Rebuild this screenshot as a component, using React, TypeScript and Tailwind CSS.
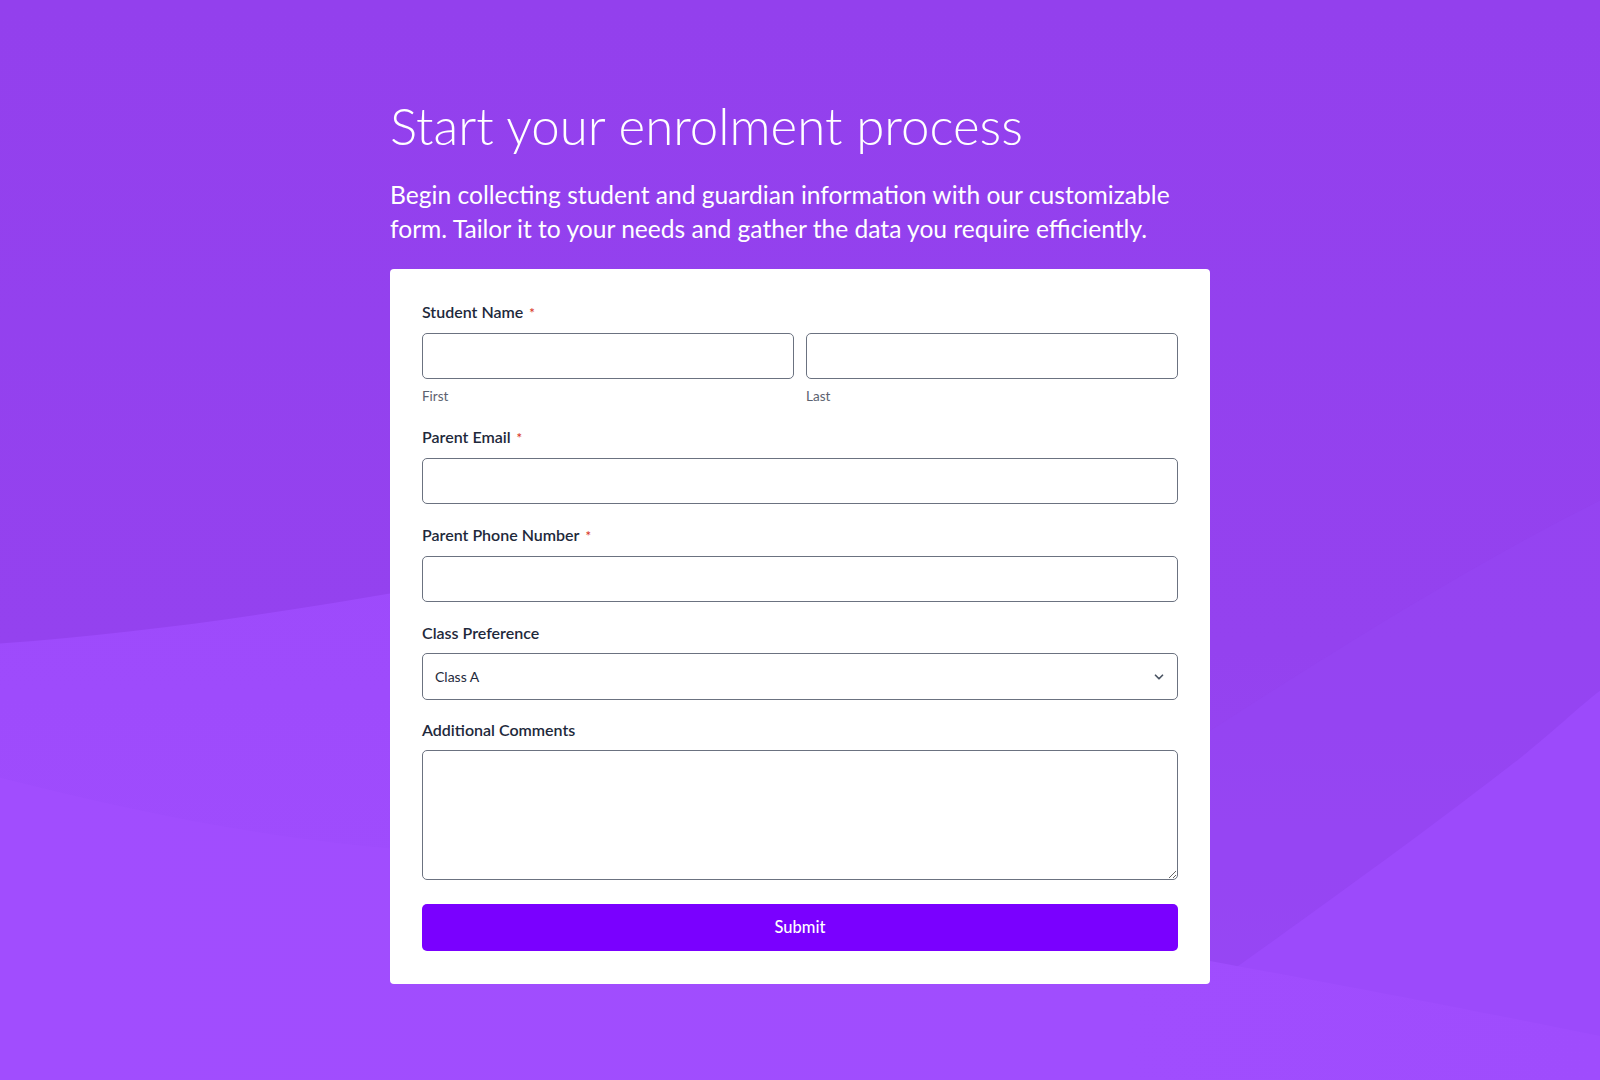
import React from 'react';
import { ChevronDown } from 'lucide-react';

// Background waves drawn behind the form
function Waves() {
  return (
    <svg
      className="absolute inset-0 w-full h-full"
      viewBox="0 0 1600 1080"
      preserveAspectRatio="none"
    >
      <defs>
        <linearGradient id="bgTop" x1="0" y1="0" x2="0" y2="1">
          <stop offset="0" stopColor="#9340ed" />
          <stop offset="0.6" stopColor="#9442ef" />
          <stop offset="1" stopColor="#9948f6" />
        </linearGradient>
        <linearGradient id="bgLow" x1="0" y1="0" x2="0" y2="1">
          <stop offset="0" stopColor="#9d4afb" />
          <stop offset="1" stopColor="#a04dfe" />
        </linearGradient>
        <linearGradient id="bgBand" x1="0" y1="0" x2="1" y2="0">
          <stop offset="0" stopColor="#a14dfe" />
          <stop offset="0.7" stopColor="#a04dfe" />
          <stop offset="1" stopColor="#9f4cfd" />
        </linearGradient>
      </defs>
      <rect x="0" y="0" width="1600" height="1080" fill="url(#bgTop)" />
      {/* faint line on the right */}
      <path d="M1210 730 C 1350 640, 1480 560, 1600 500 V 1080 H 1210 Z" fill="#9645f3" opacity="0.5" />
      {/* lighter area below the left curve */}
      <path d="M0 643 C 150 632, 280 612, 420 588 L 1100 500 L 1150 1080 L 0 1080 Z" fill="url(#bgLow)" />
      {/* lighter area on the right */}
      <path d="M1000 1080 C 1100 1040, 1160 1010, 1210 985 C 1330 900, 1440 820, 1523 755 C 1560 725, 1580 705, 1600 690 V 1080 Z" fill="#9c4afb" />
      {/* lower band */}
      <path d="M0 777 C 150 815, 280 840, 420 850 L 1210 960 C 1400 995, 1500 1015, 1600 1035 V 1080 H 0 Z" fill="url(#bgBand)" />
    </svg>
  );
}

function Label({ text, required }: { text: string; required?: boolean }) {
  return (
    <label className="block text-[16px] leading-5 font-semibold text-[#1e293b] mb-[10px]">
      {text}
      {required && <span className="text-[#d93a2b] ml-[6px] text-[13px]">*</span>}
    </label>
  );
}

const inputCls =
  'block w-full h-[46px] rounded-[5px] border border-[#6b7280] bg-white px-3 text-[14px] text-[#1e293b] outline-none';

export default function App() {
  return (
    <div
      className="relative min-h-screen w-full overflow-hidden"
      style={{ fontFamily: 'Lato, "Noto Sans", sans-serif' }}
    >
      <Waves />
      <div className="relative mx-auto w-[820px] pt-[94px] pb-[97px]">
        <h1 className="text-[51px] leading-[64px] font-light text-white">
          Start your enrolment process
        </h1>
        <p className="mt-[20px] text-[24.6px] leading-[34px] text-white">
          Begin collecting student and guardian information with our customizable form. Tailor it
          to your needs and gather the data you require efficiently.
        </p>

        <form className="mt-[23px] bg-white rounded-[4px] px-8 pt-[33px] pb-[33px]">
          <div>
            <Label text="Student Name" required />
            <div className="grid grid-cols-2 gap-3">
              <div>
                <input className={inputCls} />
                <div className="mt-[9px] text-[13.5px] leading-4 text-[#5b6270]">First</div>
              </div>
              <div>
                <input className={inputCls} />
                <div className="mt-[9px] text-[13.5px] leading-4 text-[#5b6270]">Last</div>
              </div>
            </div>
          </div>

          <div className="mt-[23px]">
            <Label text="Parent Email" required />
            <input className={inputCls} type="email" />
          </div>

          <div className="mt-[21px]">
            <Label text="Parent Phone Number" required />
            <input className={inputCls} type="tel" />
          </div>

          <div className="mt-[21px]">
            <Label text="Class Preference" />
            <div className="relative">
              <select className={inputCls + ' h-[47px] appearance-none'} defaultValue="Class A">
                <option>Class A</option>
                <option>Class B</option>
                <option>Class C</option>
              </select>
              <ChevronDown
                size={14}
                strokeWidth={3}
                className="absolute right-[12px] top-1/2 -translate-y-1/2 text-[#4b5563] pointer-events-none"
              />
            </div>
          </div>

          <div className="mt-[20px]">
            <Label text="Additional Comments" />
            <textarea className="block w-full h-[130px] rounded-[5px] border border-[#6b7280] bg-white px-3 py-2 text-[14px] outline-none" />
          </div>

          <button
            type="button"
            className="mt-[24px] w-full h-[47px] rounded-[5px] bg-[#7a00ff] text-white text-[16.5px] font-medium"
          >
            Submit
          </button>
        </form>
      </div>
    </div>
  );
}
